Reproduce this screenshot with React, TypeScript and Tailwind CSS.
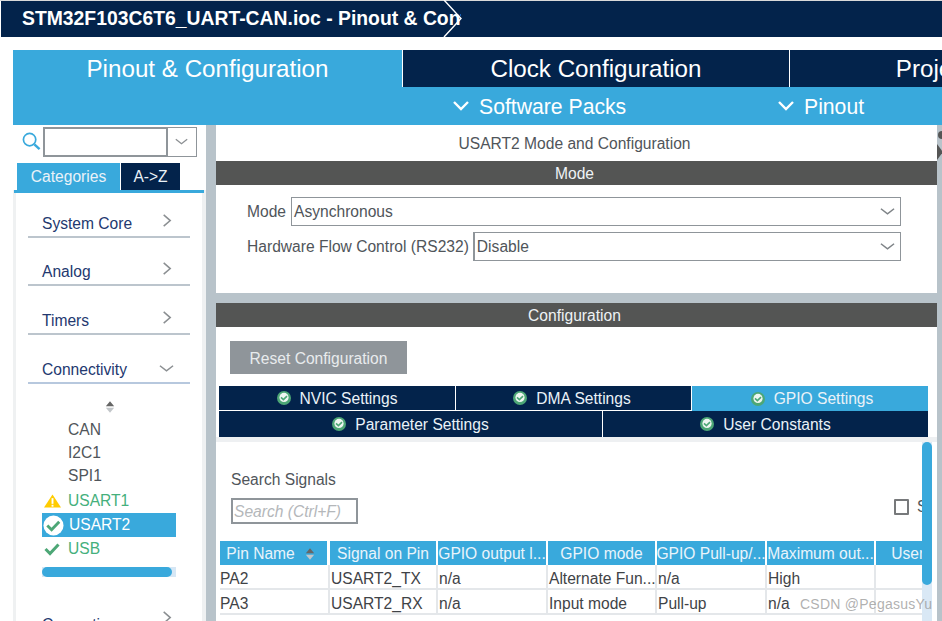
import React from "react";

const NAVY = "bg-[#03234b]";
const BLUE = "bg-[#39a9dc]";

function Chev({ dir = "down", className = "" }: { dir?: "down" | "right"; className?: string }) {
  return (
    <svg viewBox="0 0 16 16" className={className} fill="none" stroke="currentColor" strokeWidth="1.6">
      {dir === "down" ? <path d="M1 4 L8 9.5 L15 4" /> : <path d="M5 1 L12 7 L5 13" />}
    </svg>
  );
}

function Sort({ className = "" }: { className?: string }) {
  return (
    <svg viewBox="0 0 12 14" className={className}>
      <path d="M6 0 L10 5 L11 6 H1 L2 5 Z" fill="#666" />
      <path d="M1 8 H11 L6 14 Z" fill="#c2c6c9" />
    </svg>
  );
}

function TabCheck() {
  return (
    <svg viewBox="0 0 14 14" className="w-[14px] h-[14px] shrink-0">
      <circle cx="7" cy="7" r="7" fill="#4da776" />
      <circle cx="7" cy="6.4" r="4.6" fill="#eef6f1" />
      <path d="M4 6.4 L6.4 8.6 L10 5.2" fill="none" stroke="#4da776" strokeWidth="1.6" />
    </svg>
  );
}

function SettingTab({ label, active, className }: { label: string; active?: boolean; className: string }) {
  return (
    <div className={`flex items-center justify-center gap-[9px] text-[15.6px] text-[#eaf2f8] ${active ? BLUE : ""} ${className}`}>
      <TabCheck />
      <span className="pt-[1px]">{label}</span>
    </div>
  );
}

function Category({ label, open, top }: { label: string; open?: boolean; top: string }) {
  return (
    <div className={`ml-3 mr-3 flex items-end justify-between h-[24px] border-b-2 pl-[14px] pr-[18px] ${top} ${open ? "border-[#b7c8de]" : "border-[#bcc5cd]"}`}>
      <span className="text-[15.6px] leading-[24px] text-[#23386f]">{label}</span>
      {open ? (
        <Chev className="w-[15px] h-[15px] text-[#8b8f92] mb-[5px] -mr-[2px]" />
      ) : (
        <Chev dir="right" className="w-[15px] h-[15px] text-[#8b8f92] mb-[7px] -mr-[2px]" />
      )}
    </div>
  );
}

function ListItem({ label, icon, tone }: { label: string; icon?: React.ReactNode; tone: string }) {
  return (
    <div className="flex items-center h-[24px]">
      <div className="w-[26px] flex justify-start pl-[2px] shrink-0">{icon}</div>
      <span className={`text-[15.6px] ${tone}`}>{label}</span>
    </div>
  );
}

function SelectBox({ value, className }: { value: string; className: string }) {
  return (
    <div className={`flex-1 h-[29px] border border-[#8f959a] flex items-center justify-between pl-[2px] pr-[5px] text-[15.6px] text-[#50555a] ${className}`}>
      <span>{value}</span>
      <Chev className="w-[15px] h-[15px] text-[#7e8387] mt-[1px]" />
    </div>
  );
}

const headers = ["Pin Name", "Signal on Pin", "GPIO output l...", "GPIO mode", "GPIO Pull-up/...", "Maximum out...", "User Label"];
const rows = [
  ["PA2", "USART2_TX", "n/a", "Alternate Fun...", "n/a", "High", ""],
  ["PA3", "USART2_RX", "n/a", "Input mode", "Pull-up", "n/a", ""],
];
const gridCols = "grid grid-cols-[110px_108px_110px_109px_110px_109px_108px]";

export default function App() {
  return (
    <div className="relative w-[942px] h-[621px] overflow-hidden bg-white font-['Liberation_Sans',Arial,sans-serif] flex flex-col">
      {/* title bar */}
      <div className="h-px shrink-0 bg-[#d9d9d9]" />
      <div className={`h-[36px] shrink-0 ml-px ${NAVY} flex items-center pl-[21px] relative`}>
        <div className="w-[439px] overflow-hidden whitespace-nowrap text-[19.35px] font-bold text-white leading-[36px] -mt-[2px]">
          STM32F103C6T6_UART-CAN.ioc - Pinout &amp; Configuration
        </div>
        <svg viewBox="0 0 20 37" className="absolute left-[442px] -top-px w-[20px] h-[37px]" fill="none" stroke="#fff" strokeWidth="1.4">
          <path d="M1 0 L18 18.5 L1 37" />
        </svg>
      </div>

      {/* main tabs */}
      <div className="flex mt-[13px] ml-[13px] h-[37px] shrink-0 text-[24.2px] text-white whitespace-nowrap">
        <div className={`w-[389px] shrink-0 pt-[2px] ${BLUE} flex items-center justify-center`}>Pinout &amp; Configuration</div>
        <div className={`w-[387px] shrink-0 pt-[2px] ${NAVY} border-l border-white flex items-center justify-center`}>Clock Configuration</div>
        <div className={`w-[390px] shrink-0 pt-[2px] ${NAVY} border-l border-white flex items-center justify-center`}>Project Manager</div>
      </div>

      {/* sub bar */}
      <div className={`ml-[13px] h-[38px] shrink-0 ${BLUE} flex items-center text-[21.2px] text-white`}>
        <div className="flex items-center ml-[440px] w-[324px]">
          <svg viewBox="0 0 16 12" className="w-[16px] h-[12px] mr-[10px]" fill="none" stroke="#fff" strokeWidth="2.4"><path d="M1 2 L8 9 L15 2" /></svg>
          <span className="pt-[1px]">Software Packs</span>
        </div>
        <div className="flex items-center ml-[1px]">
          <svg viewBox="0 0 16 12" className="w-[16px] h-[12px] mr-[10px]" fill="none" stroke="#fff" strokeWidth="2.4"><path d="M1 2 L8 9 L15 2" /></svg>
          <span className="pt-[1px]">Pinout</span>
        </div>
      </div>

      {/* body */}
      <div className="flex-1 min-h-0 flex ml-[13px]">
        {/* left panel */}
        <aside className="w-[193px] shrink-0 bg-[#eff1f2] flex flex-col">
          <div className="bg-white flex items-start h-[38px] pt-[2px]">
            <svg viewBox="0 0 20 20" className="w-[19px] h-[19px] ml-[9px] mt-[5px]" fill="none" stroke="#39a9dc">
              <circle cx="8" cy="8" r="6.5" strokeWidth="1.8" />
              <path d="M13 13 L18.5 18" strokeWidth="2.6" />
            </svg>
            <div className="ml-[2px] w-[154px] h-[30px] flex border border-[#8f959a]">
              <div className="w-[125px] border-2 border-[#8f959a] -m-px bg-white" />
              <div className="flex-1 flex items-center justify-center">
                <Chev className="w-[13px] h-[13px] text-[#8b8f92]" />
              </div>
            </div>
          </div>
          <div className="bg-white flex pl-[4px] h-[27px] text-[15.6px] text-[#eaf2f8]">
            <div className={`w-[103px] ${BLUE} flex items-center justify-center`}>Categories</div>
            <div className={`w-[59px] ml-px ${NAVY} flex items-center justify-center`}>A-&gt;Z</div>
          </div>
          <div className={`h-[3px] ml-px mr-[2px] shrink-0 ${BLUE}`} />
          <div className="flex-1 min-h-0 overflow-hidden ml-[3px] mr-[4px] bg-white flex flex-col">
            <Category label="System Core" top="mt-[21px]" />
            <Category label="Analog" top="mt-[24px]" />
            <Category label="Timers" top="mt-[25px]" />
            <Category label="Connectivity" open top="mt-[25px]" />
            <div className="ml-[26px] w-[134px] flex flex-col">
              <Sort className="w-[10px] h-[14px] ml-[63px] mt-[16px]" />
              <div className="mt-[4px]"><ListItem label="CAN" tone="text-[#50555a]" /></div>
              <div className="mt-[-1px]"><ListItem label="I2C1" tone="text-[#50555a]" /></div>
              <div className="mt-[-1px]"><ListItem label="SPI1" tone="text-[#50555a]" /></div>
              <div className="mt-[1px]">
                <ListItem
                  label="USART1"
                  tone="text-[#45b07c]"
                  icon={
                    <svg viewBox="0 0 18 14" className="w-[17px] h-[14px]">
                      <path d="M9 0 L18 14 H0 Z" fill="#ffcc00" />
                      <rect x="8" y="4" width="2" height="6" fill="#fff" />
                      <rect x="8" y="11" width="2" height="2" fill="#fff" />
                    </svg>
                  }
                />
              </div>
              <div className={`flex items-center h-[24px] ${BLUE}`}>
                <svg viewBox="0 0 22 22" className="w-[21px] h-[21px] ml-[1px] shrink-0">
                  <circle cx="11" cy="11" r="10.5" fill="#fff" />
                  <path d="M4.5 11 L9 15.5 L17 7" fill="none" stroke="#4da776" strokeWidth="3" />
                </svg>
                <span className="ml-[5px] text-[15.6px] text-white">USART2</span>
              </div>
              <ListItem
                label="USB"
                tone="text-[#45b07c]"
                icon={
                  <svg viewBox="0 0 16 14" className="w-[16px] h-[14px]">
                    <path d="M1.5 7 L6 11.5 L14.5 2.5" fill="none" stroke="#4da776" strokeWidth="3" />
                  </svg>
                }
              />
              <div className="mt-[6px] h-[10px] bg-[#d6e7f5] shrink-0">
                <div className={`h-full w-[130px] rounded-full ${BLUE}`} />
              </div>
            </div>
            <div className="ml-[12px] mr-[12px] mt-[36px] flex justify-between pl-[14px] pr-[18px] text-[15.6px] leading-[24px] text-[#23386f]">
              <span>Computing</span>
              <Chev dir="right" className="w-[15px] h-[15px] text-[#8b8f92] -mr-[2px] -mt-[2px]" />
            </div>
          </div>
        </aside>

        <div className="w-[10px] shrink-0 bg-[#b8c3ca]" />

        {/* main */}
        <main className="w-[721px] shrink-0 bg-[#b8c3ca] flex flex-col">
          <section className="h-[168px] shrink-0 bg-white flex flex-col">
            <div className="h-[36px] flex items-center justify-center text-[15.6px] text-[#50555a] pt-[2px] pr-[4px]">USART2 Mode and Configuration</div>
            <div className="h-[24px] bg-[#545554] text-[15.6px] text-[#eef2f5] flex items-center justify-center pt-[1px] pr-[4px]">Mode</div>
            <div className="pt-[12px] pl-[31px] pr-[36px] flex flex-col gap-[6px]">
              <div className="flex items-center gap-[5px] text-[15.6px] text-[#50555a]">
                <span>Mode</span>
                <SelectBox value="Asynchronous" className="" />
              </div>
              <div className="flex items-center gap-[4px] text-[15.6px] text-[#50555a]">
                <span>Hardware Flow Control (RS232)</span>
                <SelectBox value="Disable" className="border-l-2" />
              </div>
            </div>
          </section>

          <section className="flex-1 min-h-0 mt-[10px] bg-white flex flex-col">
            <div className="h-[24px] shrink-0 bg-[#545554] text-[15.6px] text-[#eef2f5] flex items-center justify-center pt-[1px] pr-[4px]">Configuration</div>
            <div className="ml-[14px] mt-[14px] w-[177px] h-[33px] shrink-0 bg-[#8f959a] text-[15.6px] text-[#e8ebed] flex items-center justify-center pt-[2px]">Reset Configuration</div>
            <div className={`ml-[3px] mt-[12px] w-[709px] shrink-0 ${NAVY}`}>
              <div className="flex h-[25px]">
                <SettingTab label="NVIC Settings" className="w-[237px] border-r border-b border-white" />
                <SettingTab label="DMA Settings" className="w-[236px] pr-[3px] border-r border-b border-white" />
                <SettingTab label="GPIO Settings" active className="flex-1 pl-[4px]" />
              </div>
              <div className="flex h-[26px]">
                <SettingTab label="Parameter Settings" className="w-[384px] border-r border-white" />
                <SettingTab label="User Constants" className="flex-1" />
              </div>
            </div>
            <div className="h-[5px] shrink-0 bg-[#eef0f2]" />
            <div className="flex-1 min-h-0 flex pl-[2px]">
              <div className="w-[704px] shrink-0 overflow-hidden flex flex-col">
                <div className="flex h-[82px] shrink-0 pl-[13px]">
                  <div className="flex flex-col">
                    <div className="mt-[29px] h-[18px] text-[15.6px] leading-[18px] text-[#50555a]">Search Signals</div>
                    <div className="mt-[9px] w-[127px] h-[26px] border-2 border-[#8f959a] pl-[1px] text-[15.6px] leading-[23px] italic text-[#b4b7ba]">Search (Ctrl+F)</div>
                  </div>
                  <div className="ml-[536px] mt-[57px] w-[15px] h-[16px] border-2 border-[#77797b] rounded-[1px] shrink-0" />
                  <div className="ml-[8px] mt-[56px] text-[15.6px] leading-[18px] text-[#50555a] shrink-0">Show</div>
                </div>
                <div className="mt-[17px] pl-[2px] w-[800px]">
                  <div className={`${gridCols} h-[24px]`}>
                    {headers.map((h, i) => (
                      <div
                        key={h}
                        className={`${BLUE} h-full flex items-center justify-center text-[15.6px] pt-[1px] text-[#eaf4fb] whitespace-nowrap overflow-hidden ${i === 0 ? "mr-[3px] pr-[6px] gap-[10px]" : "mr-[2px]"}`}
                      >
                        <span>{h}</span>
                        {i === 0 && <Sort className="w-[10px] h-[14px]" />}
                      </div>
                    ))}
                  </div>
                  {rows.map((r) => (
                    <div key={r[0]} className={`${gridCols} h-[25px]`}>
                      {r.map((c, i) => (
                        <div key={i} className={`h-[25px] border-b-2 border-r-2 border-[#e4e7ea] text-[15.6px] leading-[28px] text-[#3f4347] whitespace-nowrap overflow-hidden ${i === 0 ? "" : "pl-[1px]"} ${i === 6 ? "border-r-0" : ""}`}>
                          {c}
                        </div>
                      ))}
                    </div>
                  ))}
                </div>
              </div>
              <div className="w-[10px] shrink-0 bg-[#d9e8f5]">
                <div className={`w-full h-[143px] rounded-[5px] ${BLUE}`} />
              </div>
            </div>
          </section>
        </main>

        {/* right splitter */}
        <div className="w-[5px] shrink-0 bg-[#b8c3ca] overflow-hidden pt-[5px]">
          <svg viewBox="0 0 5 36" className="w-[5px] h-[36px]">
            <circle cx="5" cy="5" r="4" fill="#555" />
            <path d="M0 14 L6 22 L0 30 Z" fill="#555" />
          </svg>
        </div>
      </div>

      {/* watermark */}
      <div className="absolute left-[800px] top-[595px] text-[14px] leading-[18px] tracking-[0.25px] text-[#9c9c9c]/80 whitespace-nowrap">CSDN @PegasusYu</div>
    </div>
  );
}
